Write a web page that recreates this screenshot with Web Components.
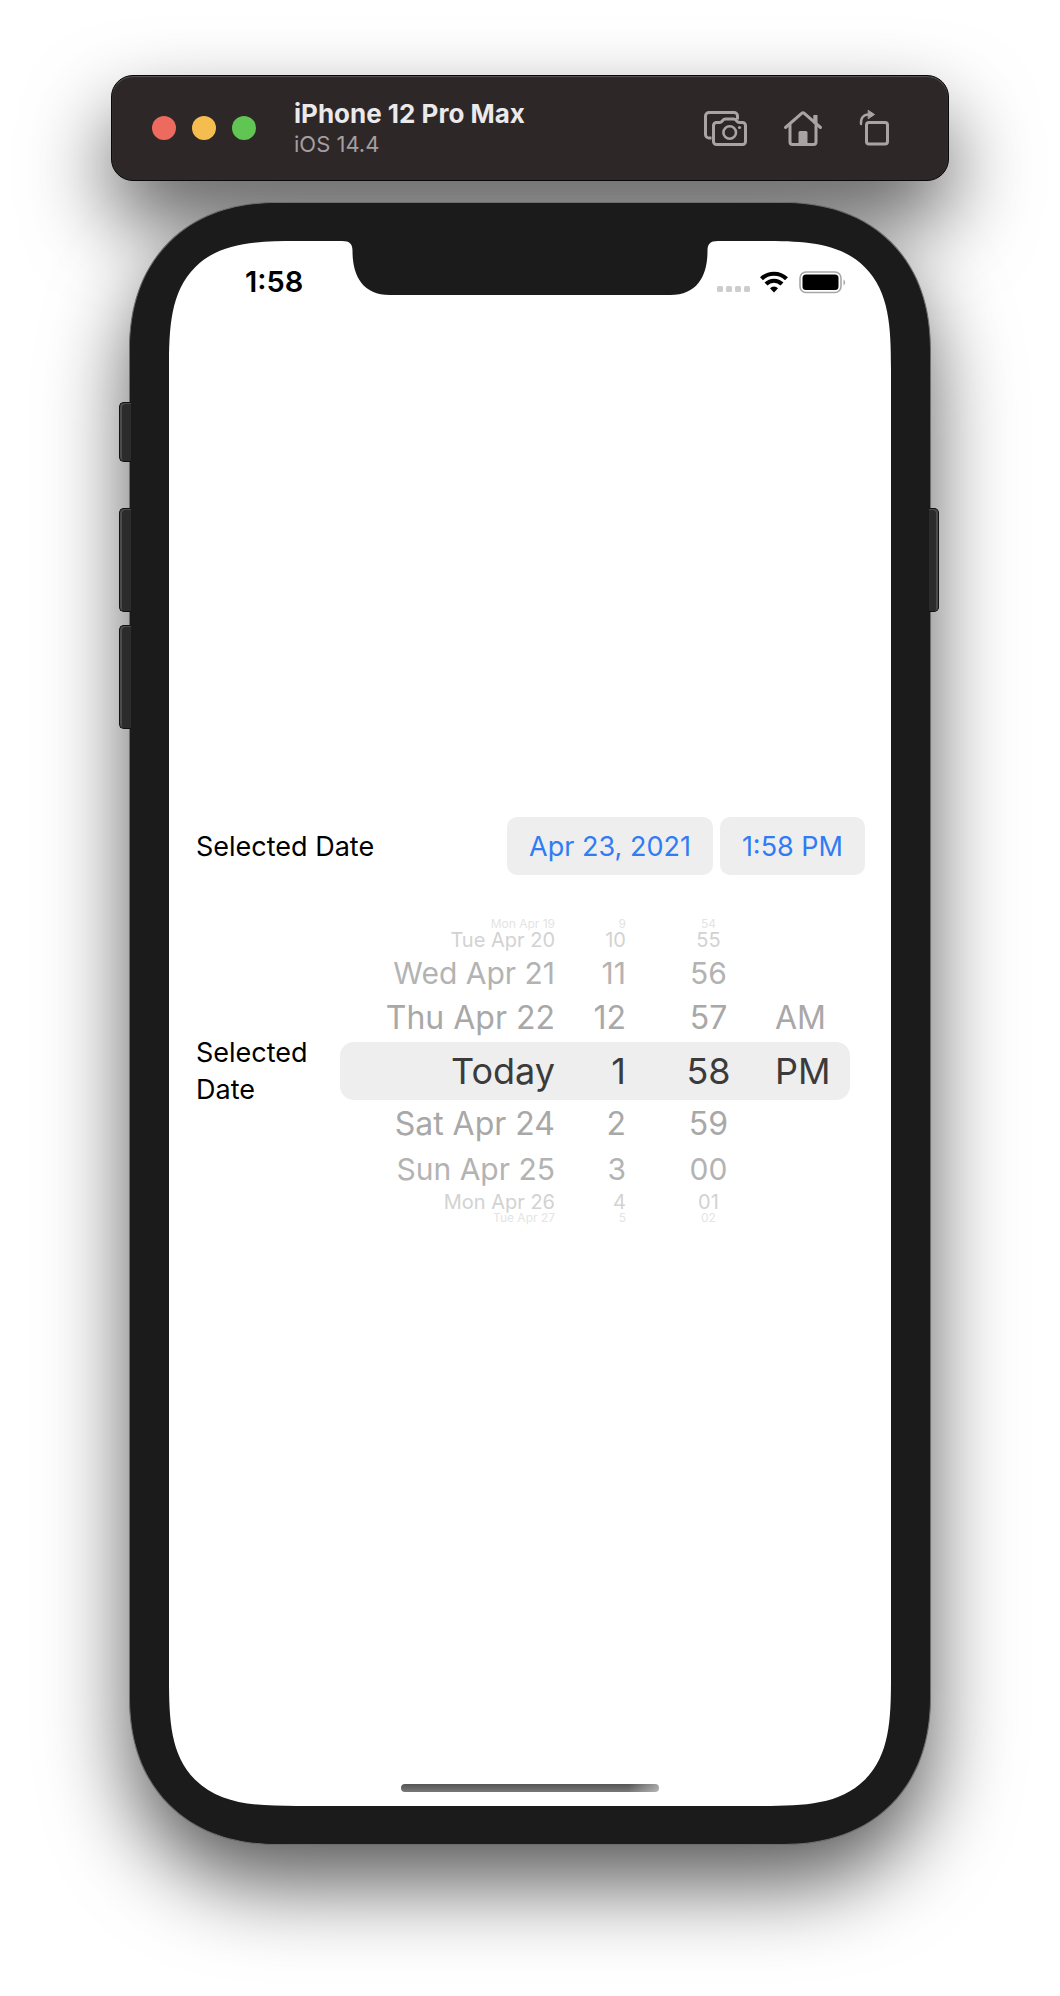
<!DOCTYPE html>
<html lang="en">
<head>
<meta charset="utf-8">
<meta name="viewport" content="width=device-width, initial-scale=1">
<title>Simulator</title>
<style>
  body { margin: 0; background: #fff; font-family: Inter, "Liberation Sans", sans-serif; }
</style>
</head>
<body>
<simulator-app></simulator-app>

<script>
const define = (name, html, setup) => {
  const template = document.createElement('template');
  template.innerHTML = html;
  customElements.define(name, class extends HTMLElement {
    constructor() {
      super();
      this.attachShadow({ mode: 'open' }).append(template.content.cloneNode(true));
    }
    connectedCallback() { if (setup) setup(this, this.shadowRoot); }
  });
};

// Title bar of the simulator window
define('window-toolbar', `
<style>
  :host { display: flex; align-items: center; position: relative; box-sizing: border-box; height: 106px;
    padding: 0 57px 0 40px; border-radius: 22px; background: #2d2728; border: 1px solid #080808;
    box-shadow: inset 0 1px 1px #5a5755; }
  :host::before { content: ""; position: absolute; inset: 0; z-index: -1; border-radius: inherit;
    box-shadow: 0 40px 84px rgba(0,0,0,.65); }
  button { appearance: none; border: 0; padding: 0; background: none; display: block; color: inherit; }
  .lights { display: flex; gap: 16px; }
  .lights button { width: 24px; height: 24px; border-radius: 50%; }
  .lights .close { background: #ed6a5e; } .lights .min { background: #f5bd4f; } .lights .zoom { background: #61c554; }
  .title { flex: 1; padding-left: 38px; color: #a59f9f; font-size: 22px; line-height: 28px; }
  h1 { margin: 0; color: #ebe9e9; font-size: 26px; line-height: 32px; font-weight: 700; }
  p { margin: 0; }
  .tools { display: flex; gap: 36px; color: #aaa3a3; }
  svg { display: block; fill: none; stroke: currentColor; stroke-width: 3; stroke-linejoin: round; stroke-linecap: round; }
</style>
<div class="lights">
  <button class="close" aria-label="Close"></button>
  <button class="min" aria-label="Minimize"></button>
  <button class="zoom" aria-label="Zoom"></button>
</div>
<div class="title"><h1><slot name="device"></slot></h1><p><slot name="system"></slot></p></div>
<div class="tools">
  <button aria-label="Screenshot"><svg width="44" height="38" viewBox="0 0 44 38">
    <path d="M8.500 29H6a3.500 3.500 0 0 1-3.500-3.500V7A3.500 3.500 0 0 1 6 3.500h25A3.500 3.500 0 0 1 34.500 7v3.500" stroke-linecap="butt"/>
    <path d="M13.500 13.500h3c1.500 0 2.200-.8 3-1.800.8-1.100 1.500-1.700 3-1.700h8c1.500 0 2.200.6 3 1.700.8 1 1.500 1.800 3 1.800h3a3 3 0 0 1 3 3V32.500a3 3 0 0 1-3 3h-26a3 3 0 0 1-3-3v-16a3 3 0 0 1 3-3z"/>
    <circle cx="26.700" cy="23.500" r="6.300" stroke-width="2.600"/><circle cx="36.500" cy="18.500" r="1.600" fill="currentColor" stroke="none"/>
  </svg></button>
  <button aria-label="Home"><svg width="40" height="38" viewBox="0 0 40 38">
    <path d="M2.500 18.500 18.700 4.300a2 2 0 0 1 2.600 0L37.500 18.500"/>
    <path d="M7 16v17a2.500 2.500 0 0 0 2.500 2.500h21A2.500 2.500 0 0 0 33 33V16M32 13V7.500"/>
    <path d="M30.500 6h4v9h-4zM15.500 23.500a1.500 1.500 0 0 1 1.500-1.500h6a1.500 1.500 0 0 1 1.500 1.500V35h-9z" fill="currentColor" stroke="none"/>
  </svg></button>
  <button aria-label="Rotate"><svg width="32" height="38" viewBox="0 0 32 38">
    <rect x="7.500" y="13.500" width="21" height="21.500" rx="2.500"/>
    <path d="M2 15c-.5-6 2.500-9.500 7.500-9.500" stroke-width="2.400"/>
    <path d="M9.500 1.500 15.500 5.500 9.500 9.500z" fill="currentColor" stroke-width="1"/>
  </svg></button>
</div>`);

// Hardware shell: side buttons around a bezel with the screen inside
define('phone-frame', `
<style>
  :host { display: grid; grid-template-columns: 18px 1fr 18px; position: relative; }
  .keys { display: flex; flex-direction: column; align-items: flex-end; position: relative; z-index: 1; }
  .keys.right { align-items: flex-start; }
  .key { box-sizing: border-box; width: 12px; margin-right: -2px; height: 104px; background: #2b2b2b;
    border: 1px solid #111; border-right: 0; border-radius: 5px 0 0 5px; box-shadow: inset 2px 1px 0 #4b4b4b; }
  .silent { height: 60px; margin-top: 200px; margin-bottom: 46px; }
  .up { margin-bottom: 13px; }
  .power { width: 10px; margin: 306px 0 0 -2px; transform: scaleX(-1); }
  .body { position: relative; padding: 38px 39px; background: #1b1b1b; border: 1px solid #6d6d6d; border-radius: 133px; }
  .body::before { content: ""; position: absolute; inset: 0; z-index: -1; border-radius: inherit;
    box-shadow: 0 40px 84px rgba(0,0,0,.65); }
  .screen { display: flex; flex-direction: column; overflow: hidden; background: #fff; border-radius: 92px;
    aspect-ratio: 722 / 1565; }
  @supports (corner-shape: superellipse(1.5)) {
    .body, .body::before { border-radius: 148px; corner-shape: superellipse(1.15); }
    .screen { border-radius: 128px; corner-shape: superellipse(1.6); }
  }
</style>
<div class="keys"><div class="key silent"></div><div class="key up"></div><div class="key"></div></div>
<div class="body"><div class="screen"><slot></slot></div></div>
<div class="keys right"><div class="key power"></div></div>`);

define('status-bar', `
<style>
  :host { display: grid; grid-template-columns: 1fr 376px 1fr; height: 54px; color: #000; }
  time { align-self: center; padding: 27px 0 0 76px; font-size: 29px; line-height: 28px; font-weight: 600; }
  .notch { display: block; fill: #1b1b1b; }
  .icons { display: flex; align-items: flex-end; padding: 0 0 2px 0; }
  .icons svg { display: block; overflow: visible; }
</style>
<time><slot></slot></time>
<svg class="notch" width="376" height="54" viewBox="0 0 376 54" aria-hidden="true">
  <path d="M0 0C8 0 10.500 3 10.500 10C10.500 34 20 54 48 54H328C356 54 365.500 34 365.500 10C365.500 3 368 0 376 0Z"/>
</svg>
<div class="icons">
  <svg width="130" height="24" viewBox="0 0 130 24" aria-label="Wi-Fi connected, battery full" role="img">
    <g fill="#cdcdcd"><rect x="-1" y="16" width="6" height="6" rx="1.500"/><rect x="8" y="16" width="6" height="6" rx="1.500"/><rect x="17" y="16" width="6" height="6" rx="1.500"/><rect x="26" y="16" width="6" height="6" rx="1.500"/></g>
    <g fill="none" stroke="#000" stroke-width="4.200"><path d="M43.500 8.800a18 18 0 0 1 25 0"/><path d="M48 14a11.500 11.500 0 0 1 16 0"/></g>
    <path d="M56 22.500 52 18.300a5.600 5.600 0 0 1 8 0z"/>
    <rect x="82" y="2" width="41" height="20.500" rx="6" fill="none" stroke="#a6a6a6" stroke-width="1.600"/>
    <rect x="84.500" y="4.500" width="36" height="15.500" rx="3.500"/>
    <path d="M125.500 9.500a3.500 3.500 0 0 1 0 6z" fill="#a6a6a6"/>
  </svg>
</div>`);

// One column of the wheel; values come as a comma list, the middle one is selected
define('wheel-column', `
<style>
  :host { display: block; text-align: right; color: #3b3b3b; white-space: nowrap; }
  div { display: flex; flex-direction: column; height: 302px; }
  span { flex: none; height: 58px; line-height: 58px; font-size: 36px; }
  .d1 { height: 48px; line-height: 48px; font-size: 32px; color: #a8a8a8; }
  .d2 { height: 42px; line-height: 42px; font-size: 30px; color: #b3b3b3; }
  .d3 { height: 24px; line-height: 24px; font-size: 20px; color: #d2d2d2; }
  .d4 { height: 8px; line-height: 8px; font-size: 12px; color: #e4e4e4; }
</style>
<div role="listbox"></div>`, (host, root) => {
  const list = root.querySelector('div');
  list.setAttribute('aria-label', host.getAttribute('name'));
  const values = host.getAttribute('values').split(',');
  const middle = (values.length - 1) / 2;
  list.replaceChildren(...values.map((value, i) => {
    const row = document.createElement('span');
    const distance = Math.abs(i - middle);
    row.setAttribute('role', 'option');
    row.setAttribute('aria-selected', String(!distance));
    if (distance) row.className = 'd' + distance;
    row.textContent = value;
    return row;
  }));
});

define('date-wheel', `
<style>
  :host { display: grid; grid-template-columns: 215fr 71fr 105fr 119fr; align-items: center; }
  :host::before { content: ""; grid-area: 1 / 1 / 2 / 5; height: 58px; border-radius: 14px; background: #eee; }
  wheel-column { grid-row: 1; }
  .date { grid-column: 1; } .hour { grid-column: 2; }
  .minute { grid-column: 3; text-align: center; padding-left: 60px; }
  .period { grid-column: 4; text-align: left; padding-left: 44px; }
</style>
<wheel-column class="date" name="Day" values="Mon Apr 19,Tue Apr 20,Wed Apr 21,Thu Apr 22,Today,Sat Apr 24,Sun Apr 25,Mon Apr 26,Tue Apr 27"></wheel-column>
<wheel-column class="hour" name="Hour" values="9,10,11,12,1,2,3,4,5"></wheel-column>
<wheel-column class="minute" name="Minute" values="54,55,56,57,58,59,00,01,02"></wheel-column>
<wheel-column class="period" name="Period" values=",,,AM,PM,,,,"></wheel-column>`);

define('date-form', `
<style>
  :host { flex: 1; display: flex; flex-direction: column; justify-content: center; gap: 45px;
    padding: 0 26px 40px 27px; color: #000; font-size: 27px; line-height: 37px; }
  .row { display: flex; align-items: center; }
  .compact { gap: 7px; }
  .compact label { flex: 1; }
  button { appearance: none; border: 0; margin: 0; height: 58px; padding: 0 22px; border-radius: 10px;
    background: #eee; color: #2f7cf6; font: inherit; }
  .wheel { padding-right: 15px; }
  .wheel label { flex: 1; }
  date-wheel { flex: 0 0 510px; }
</style>
<div class="row compact">
  <label for="day">Selected Date</label>
  <button id="day">Apr 23, 2021</button>
  <button aria-label="1:58 PM">1:58 PM</button>
</div>
<div class="row wheel">
  <label id="wheel-label" for="wheel">Selected Date</label>
  <date-wheel id="wheel" role="group" aria-labelledby="wheel-label"></date-wheel>
</div>`);

define('home-indicator', `
<style>
  :host { display: flex; justify-content: center; padding-bottom: 14px; }
  div { width: 258px; height: 8px; border-radius: 4px;
    background: linear-gradient(90deg, transparent 88%, rgba(255,255,255,.45)), linear-gradient(#555, #787878); }
</style>
<div></div>`);

define('simulator-app', `
<style>
  :host { display: flex; flex-direction: column; gap: 21px; padding: 75px 111px 149px; isolation: isolate; }
</style>
<window-toolbar><span slot="device">iPhone 12 Pro Max</span><span slot="system">iOS 14.4</span></window-toolbar>
<phone-frame>
  <status-bar>1:58</status-bar>
  <date-form></date-form>
  <home-indicator></home-indicator>
</phone-frame>`);
</script>
</body>
</html>
